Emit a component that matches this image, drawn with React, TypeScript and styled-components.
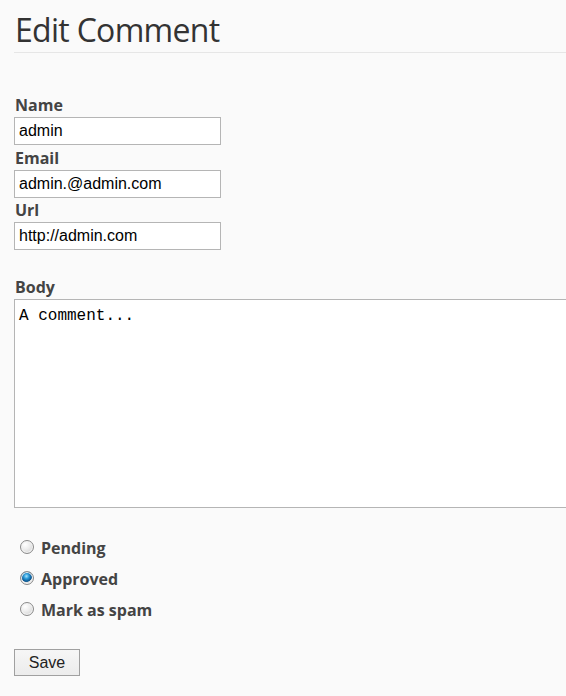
import React from 'react';
import styled, { createGlobalStyle } from 'styled-components';

const GlobalStyle = createGlobalStyle`
  html, body {
    margin: 0;
    padding: 0;
    background: #fafafa;
    overflow: hidden;
  }
`;

const Page = styled.div`
  padding-left: 14px;
  font-family: 'Open Sans', 'Noto Sans', sans-serif;
  color: #444;
  min-height: 696px;
  overflow: hidden;
`;

const Title = styled.h1`
  margin: 0;
  padding: 10px 0 2px 1px;
  font-size: 32px;
  line-height: 40px;
  font-weight: 400;
  letter-spacing: -0.7px;
  color: #333;
  border-bottom: 1px solid #e6e6e6;
`;

const Form = styled.form`
  display: flex;
  flex-direction: column;
  align-items: flex-start;
  padding-top: 42px;
`;

const Field = styled.div<{ $gap?: number }>`
  display: flex;
  flex-direction: column;
  align-items: flex-start;
  margin-top: ${(p) => p.$gap ?? 0}px;
  width: 100%;
`;

const Label = styled.label`
  font-size: 16px;
  line-height: 20px;
  font-weight: 700;
  padding-left: 1px;
  margin-bottom: 2px;
`;

const TextInput = styled.input`
  box-sizing: border-box;
  width: 207px;
  height: 28px;
  margin: 0;
  padding: 0 4px;
  border: 1px solid #b5b5b5;
  background: #fff;
  font-family: 'Liberation Sans', Arial, sans-serif;
  font-size: 16px;
  color: #000;
  outline: none;
`;

const Body = styled.textarea`
  box-sizing: border-box;
  width: 620px;
  height: 209px;
  margin: 0;
  padding: 6px 4px 4px;
  border: 1px solid #b5b5b5;
  background: #fff;
  font-family: 'Liberation Mono', 'Courier New', monospace;
  font-size: 16px;
  line-height: 20px;
  color: #000;
  resize: none;
  outline: none;
`;

const Statuses = styled.div`
  display: flex;
  flex-direction: column;
  margin-top: 24px;
`;

const Option = styled.label`
  display: flex;
  align-items: center;
  height: 31px;
  font-size: 16px;
  font-weight: 700;
  cursor: pointer;
`;

const Radio = styled.input.attrs({ type: 'radio' })`
  appearance: none;
  box-sizing: border-box;
  width: 14px;
  height: 14px;
  margin: 0 7px 0 6px;
  border-radius: 50%;
  border: 1px solid #8a8a8a;
  background: radial-gradient(circle at 35% 30%, #ffffff 0%, #eeeeee 40%, #c8c8c8 100%);
  box-shadow: inset 0 0 0 1px #f4f4f4;
  position: relative;
  top: -1px;
  &:checked {
    background:
      radial-gradient(circle at 45% 35%, #a8e2fb 0%, #2a9ad8 25%, #0d5690 50%, #2c6f9e 54%, transparent 58%),
      radial-gradient(circle at 35% 30%, #ffffff 0%, #eeeeee 40%, #c8c8c8 100%);
  }
`;

const SaveButton = styled.button`
  box-sizing: border-box;
  width: 66px;
  height: 27px;
  margin-top: 24px;
  padding: 0;
  border: 1px solid #a0a0a0;
  background: linear-gradient(#f6f6f6, #ececec);
  font-family: 'Liberation Sans', Arial, sans-serif;
  font-size: 16px;
  color: #222;
`;

const statuses = [
  { value: 'pending', label: 'Pending' },
  { value: 'approved', label: 'Approved' },
  { value: 'spam', label: 'Mark as spam' },
];

export default function App() {
  return (
    <>
      <GlobalStyle />
      <Page>
        <Title>Edit Comment</Title>
        <Form onSubmit={(e) => e.preventDefault()}>
          <Field>
            <Label htmlFor="name">Name</Label>
            <TextInput id="name" defaultValue="admin" />
          </Field>
          <Field $gap={3}>
            <Label htmlFor="email">Email</Label>
            <TextInput id="email" defaultValue="admin.@admin.com" />
          </Field>
          <Field $gap={2}>
            <Label htmlFor="url">Url</Label>
            <TextInput id="url" defaultValue="http://admin.com" />
          </Field>
          <Field $gap={27}>
            <Label htmlFor="body">Body</Label>
            <Body id="body" defaultValue="A comment..." />
          </Field>
          <Statuses>
            {statuses.map((s) => (
              <Option key={s.value}>
                <Radio name="status" value={s.value} defaultChecked={s.value === 'approved'} />
                {s.label}
              </Option>
            ))}
          </Statuses>
          <SaveButton type="submit">Save</SaveButton>
        </Form>
      </Page>
    </>
  );
}
